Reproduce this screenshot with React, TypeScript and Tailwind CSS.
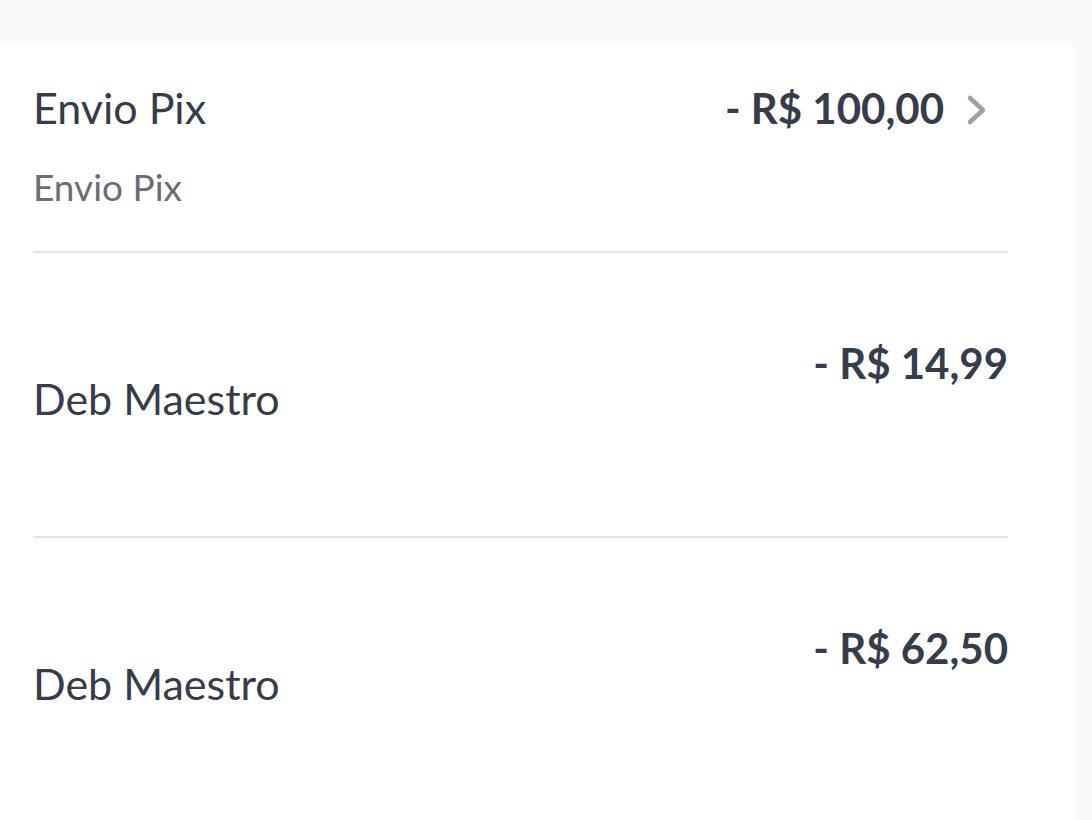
import React from 'react';

interface Tx {
  title: string;
  subtitle?: string;
  amount: string;
  link?: boolean;
}

const items: Tx[] = [
  { title: 'Envio Pix', subtitle: 'Envio Pix', amount: '- R$ 100,00', link: true },
  { title: 'Deb Maestro', amount: '- R$ 14,99' },
  { title: 'Deb Maestro', amount: '- R$ 62,50' },
];

const Chevron = () => (
  <svg width="22" height="34" viewBox="0 0 22 34" fill="none" className="ml-[22px] mt-[4px]">
    <path d="M4 5 L17 17 L4 29" stroke="#9fa0a6" strokeWidth="4.5" strokeLinecap="round" strokeLinejoin="round" />
  </svg>
);

const App: React.FC = () => {
  return (
    <div className="min-h-screen w-full bg-[#fafafa] pt-[42px] font-['Lato',sans-serif] text-[#363c4a]">
      <div className="w-[1073px] min-h-[778px] bg-white pl-[33px] pr-[65px]">
        {/* first item: title + subtitle, chevron */}
        <div className="flex justify-between pt-[40px] pb-[42px] border-b-2 border-[#e3e3e8]">
          <div className="flex flex-col">
            <span className="text-[43px] leading-[52px]">{items[0].title}</span>
            <span className="text-[37px] leading-[44px] mt-[31px] text-[#6b6d74]">{items[0].subtitle}</span>
          </div>
          <div className="flex items-center h-[52px] pr-[20px]">
            <span className="text-[42px] leading-[52px] font-bold">{items[0].amount}</span>
            <Chevron />
          </div>
        </div>

        {items.slice(1).map((t, i) => (
          <div key={i} className="flex justify-between pt-[85px] pb-[111px] border-b-2 border-[#e3e3e8]">
            <span className="text-[43px] leading-[52px] mt-[35px]">{t.title}</span>
            <span className="text-[42px] leading-[50px] font-bold">{t.amount}</span>
          </div>
        ))}
      </div>
    </div>
  );
};

export default App;
